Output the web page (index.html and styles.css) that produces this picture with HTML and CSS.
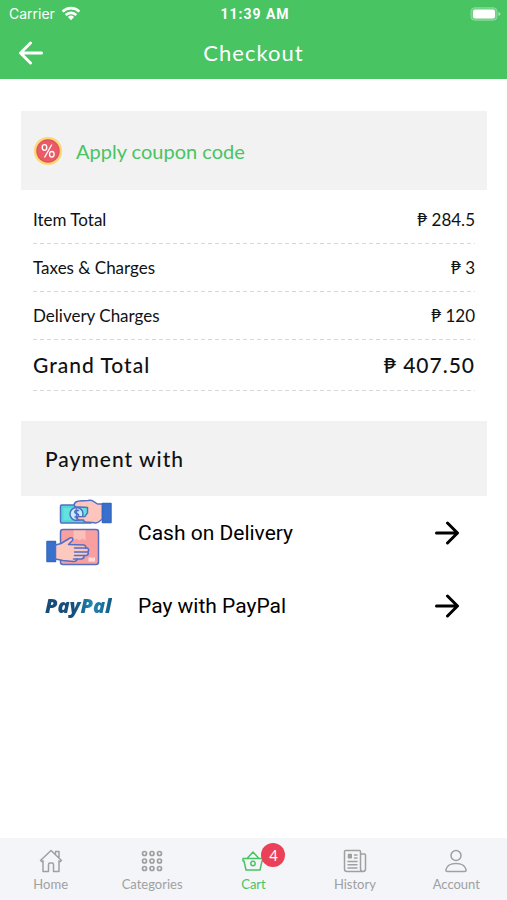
FILE: index.html
```html
<!DOCTYPE html>
<html lang="en">
<head>
<meta charset="utf-8">
<meta name="viewport" content="width=device-width, initial-scale=1">
<title>Checkout</title>
<link rel="stylesheet" href="styles.css">
</head>
<body>
<header class="top">
  <div class="status">
    <span class="carrier">Carrier
      <svg width="20" height="15" viewBox="0 0 20 15" fill="none" stroke="#fff" stroke-width="2.6" aria-hidden="true"><path d="M1.6 5.6a12 12 0 0 1 16.8 0M4.7 9a7.6 7.6 0 0 1 10.6 0"/><path d="M10 14.2 6.9 11a4.5 4.5 0 0 1 6.2 0z" fill="#fff" stroke="none"/></svg>
    </span>
    <span class="time">11:39 AM</span>
    <svg class="battery" width="31" height="14" viewBox="0 0 31 14" aria-hidden="true"><rect x="1" y=".8" width="26" height="12.4" rx="3.5" fill="#6dd184" stroke="#8bd99c"/><rect x="3" y="2.6" width="22" height="8.8" rx="2" fill="#fff"/><path d="M28.500 5v4q2-.8 2-2t-2-2z" fill="#a8e5b5"/></svg>
  </div>
  <div class="nav">
    <button class="back" aria-label="Back"><svg width="26" height="24" viewBox="0 0 26 24" fill="none" stroke="#fff" stroke-width="3" stroke-linecap="round" stroke-linejoin="round"><path d="M12.500 2 2.500 12l10 10M3 12h20.500"/></svg></button>
    <h1>Checkout</h1>
  </div>
</header>

<main>
  <button class="coupon">
    <svg width="30" height="30" viewBox="0 0 30 30" aria-hidden="true"><circle cx="15" cy="15" r="14" fill="#fcd670"/><circle cx="15" cy="15" r="13.600" fill="none" stroke="#fbdc8c" stroke-dasharray="3 2"/><circle cx="15" cy="15" r="11.700" fill="#df4f5e"/><circle cx="15" cy="15" r="10.500" fill="#ea5b68"/><g fill="none" stroke="#fff" stroke-width="1.300"><ellipse cx="11.500" cy="11.500" rx="2.300" ry="2.800"/><ellipse cx="18.800" cy="18.300" rx="2.300" ry="2.800"/><path d="m18.800 8.500-7.300 13"/></g></svg>
    Apply coupon code
  </button>

  <dl class="totals">
    <div><dt>Item Total</dt><dd>₱ 284.5</dd></div>
    <div><dt>Taxes &amp; Charges</dt><dd>₱ 3</dd></div>
    <div><dt>Delivery Charges</dt><dd>₱ 120</dd></div>
    <div class="grand"><dt>Grand Total</dt><dd>₱ 407.50</dd></div>
  </dl>

  <h2>Payment with</h2>
  <button class="method">
    <span class="logo">
      <svg width="68" height="68" viewBox="0 0 68 68" stroke="#526fc5" stroke-width="1.500" stroke-linejoin="round" stroke-linecap="round" aria-hidden="true">
        <rect x="15.500" y="30.500" width="38" height="35" rx="2.500" fill="#f99f9f"/>
        <path d="M28.500 31.500h12v10l-3-2-3 2-3-2-3 2z" fill="#fbc0b9" stroke="none"/>
        <path d="M43.500 58.500h6.500v4h-6.500z" fill="#ffdcda" stroke="none"/>
        <path d="M2 42.500h8.500v20H2z" fill="#3970cc" stroke="#3568c4"/>
        <path d="M10.500 46 16 44.500l9-5.500c2.500-1 4 1 2 3L23.500 45.500l15.500.5q2.500 1 1.500 3h2q2 1.500.5 4 1 2.500-1.500 3.500h-2.500q.5 3-2.500 3.500h-4.500q0 2.500-4 2.500l-10-1-7.500-1.500z" fill="#fdc8be"/>
        <path d="M29.500 49H41M29.500 53H42.500M29.500 56.500H39M28.500 60H32" fill="none"/>
        <rect x="15.500" y="6" width="31" height="18" rx="1" fill="#50d9d7"/>
        <path d="M18.500 9h25v12h-25z" fill="#65e2dd" stroke="none"/>
        <circle cx="31.500" cy="15" r="6.500" fill="#c3f1fa"/>
        <path d="M33.500 11.500c-4-1-5 2-2 3s3 4-1.500 3.500M31.500 10v10" fill="none"/>
        <path d="M29.500 4.500Q31 2 34.500 2L43 1.500q3-.8 5.500.8l4 2.700h5v15l-4 3q-2 1.500-6 .5l-7-.5q-2-.5-2-2h-4q-3-.5-2-3.200l7.500-.4 2.500-3.500V8.500l-7-.5H31q-2.500-1-1.500-3.500z" fill="#fdc5bb"/>
        <path d="M57.500 4.500H66v19h-8.500z" fill="#3970cc" stroke="#3568c4"/>
      </svg>
    </span>
    <span class="name">Cash on Delivery</span>
    <svg class="go" width="26" height="24" viewBox="0 0 26 24" aria-hidden="true"><path d="M13.500 2l10 10-10 10M2.500 12H23"/></svg>
  </button>
  <button class="method">
    <span class="logo"><span class="paypal">PayPal</span></span>
    <span class="name">Pay with PayPal</span>
    <svg class="go" width="26" height="24" viewBox="0 0 26 24" aria-hidden="true"><path d="M13.500 2l10 10-10 10M2.500 12H23"/></svg>
  </button>
</main>

<nav class="tabs">
  <a href="#home"><svg width="24" height="24" viewBox="0 0 24 24" aria-hidden="true"><path d="M1.500 11.500 12 1.500l10.500 10-1.500 1.200-1-.9v10.700h-5.500v-7q0-1.500-1.500-1.500h-2q-1.500 0-1.500 1.500v7H4V11.800l-1 .9zM16.500 5V2.500H20v6"/></svg>Home</a>
  <a href="#categories"><svg width="24" height="24" viewBox="0 0 24 24" aria-hidden="true"><g stroke-width="1.700"><circle cx="4.500" cy="4.500" r="2"/><circle cx="12" cy="4.500" r="2"/><circle cx="19.500" cy="4.500" r="2"/><circle cx="4.500" cy="12" r="2"/><circle cx="12" cy="12" r="2"/><circle cx="19.500" cy="12" r="2"/><circle cx="4.500" cy="19.500" r="2"/><circle cx="12" cy="19.500" r="2"/><circle cx="19.500" cy="19.500" r="2"/></g></svg>Categories</a>
  <a href="#cart" class="active"><span class="cart"><svg width="24" height="24" viewBox="0 0 24 24" aria-hidden="true"><path d="M2 9.500h20v2.500h-1l-2 9H5L3 12H2zM6 9.500l6-6.500 6 6.500"/><circle cx="12" cy="14.500" r="2.200"/></svg><span class="badge">4</span></span>Cart</a>
  <a href="#history"><svg width="24" height="24" viewBox="0 0 24 24" aria-hidden="true"><path d="M17.500 20V2.500q0-1-1-1h-14q-1 0-1 1V20q0 2.500 2.500 2.500h16q2.500 0 2.500-2.500V6q0-1-1-1h-4M17.500 19.500q0 3 2.500 3M5 12.500h9M5 15.700h9M5 19h9M11.500 6H14M11.500 9H14"/><path d="M5.500 5.500h2.800v3.300H5.500z" fill="currentColor"/></svg>History</a>
  <a href="#account"><svg width="24" height="24" viewBox="0 0 24 24" aria-hidden="true"><circle cx="12" cy="6.500" r="5"/><path d="M3.500 22.500q-2 0-1.500-2c1-4 5-6 10-6s9 2 10 6q.5 2-1.500 2z"/></svg>Account</a>
</nav>
</body>
</html>
```

FILE: styles.css
```css
* { box-sizing: border-box; }
body {
  margin: 0;
  min-height: 100vh;
  display: flex;
  flex-direction: column;
  background: #fff;
  color: #111;
  font-family: Lato, "Open Sans", sans-serif;
}
button {
  border: 0;
  padding: 0;
  background: none;
  color: inherit;
  font: inherit;
  text-align: left;
  cursor: pointer;
}
svg { display: block; flex: none; }

.top { background: #48c462; color: #fff; }
.status {
  display: grid;
  grid-template-columns: 1fr auto 1fr;
  align-items: center;
  height: 27px;
  padding: 0 6px 0 9px;
  font: 14px/20px Inter, sans-serif;
}
.carrier { display: flex; align-items: center; gap: 6px; }
.time { font: 700 14px/20px Roboto, sans-serif; letter-spacing: 1px; }
.battery { justify-self: end; }
.nav {
  display: grid;
  grid-template-columns: 1fr auto 1fr;
  align-items: center;
  height: 52px;
  padding: 0 18px;
}
.nav h1 { margin: 0; font-size: 22px; line-height: 28px; font-weight: 400; letter-spacing: 1px; }

main { flex: 1; padding: 32px 20px 0 21px; }
.coupon {
  display: flex;
  align-items: center;
  gap: 13px;
  width: 100%;
  height: 79px;
  padding: 0 12px;
  background: #f2f2f2;
  color: #48c462;
  font-size: 20px;
}

.totals { margin: 0; padding: 6px 12px 0; font-size: 17px; }
.totals div {
  display: flex;
  justify-content: space-between;
  align-items: center;
  height: 48px;
  padding-bottom: 2px;
  background: repeating-linear-gradient(90deg, #d8d8d8 0 4px, transparent 4px 7px) bottom / 100% 1px no-repeat;
}
.totals dd { margin: 0; }
.totals .grand { height: 51px; font-size: 21px; font-weight: 500; letter-spacing: 1px; }

h2 {
  margin: 30px 0 0;
  padding: 24px;
  background: #f2f2f2;
  font-size: 21px;
  line-height: 27px;
  font-weight: 500;
  letter-spacing: 1px;
}
.method {
  display: flex;
  align-items: center;
  width: 100%;
  height: 73px;
  padding: 0 27px 0 24px;
  color: #000;
  font: 21px/28px Roboto, sans-serif;
}
.logo { width: 93px; }
.name { flex: 1; }
.paypal {
  font: italic 800 20px/26px "Open Sans", sans-serif;
  background: linear-gradient(90deg, #184b78, #17507c 45%, #2386b4 70%, #155b85);
  background-clip: text;
  -webkit-background-clip: text;
  color: transparent;
}
.go { fill: none; stroke: #000; stroke-width: 3; stroke-linecap: round; stroke-linejoin: round; }

.tabs {
  display: grid;
  grid-template-columns: repeat(5, 1fr);
  height: 62px;
  padding-top: 11px;
  background: #f3f5f9;
}
.tabs a {
  display: flex;
  flex-direction: column;
  align-items: center;
  gap: 3px;
  color: #a0a0a0;
  font-size: 13px;
  line-height: 16px;
  text-decoration: none;
}
.tabs svg { fill: none; stroke: currentColor; stroke-width: 1.5; stroke-linejoin: round; stroke-linecap: round; }
.tabs .active { color: #48c462; }
.cart { position: relative; }
.badge {
  position: absolute;
  left: 20px;
  top: -6px;
  width: 24px;
  height: 24px;
  border-radius: 50%;
  background: #ea4058;
  color: #fff;
  font-size: 15px;
  line-height: 24px;
  text-align: center;
}
```
